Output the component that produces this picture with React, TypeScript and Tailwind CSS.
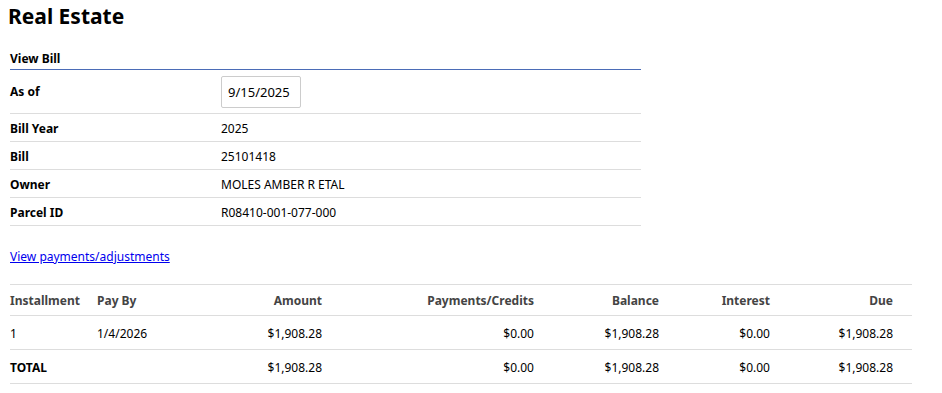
import { FC } from 'react';

interface InfoRow {
  label: string;
  value: string;
}

const info: InfoRow[] = [
  { label: 'Bill Year', value: '2025' },
  { label: 'Bill', value: '25101418' },
  { label: 'Owner', value: 'MOLES AMBER R ETAL' },
  { label: 'Parcel ID', value: 'R08410-001-077-000' },
];

const cols = 'grid grid-cols-[87px_120px_105px_212px_125px_111px_123px] pr-[19px] pt-[2px]';

const App: FC = () => {
  return (
    <div className="min-h-screen bg-white text-black text-[12px] font-['Noto_Sans','Open_Sans',sans-serif]">
      <h1 className="pl-2 pt-[2px] text-[21px] font-bold leading-[28px]">Real Estate</h1>

      <div className="ml-[10px] mt-[20px] w-[631px]">
        <div className="border-b border-[#4b6cb7] pb-[1px] font-bold leading-[18px]">View Bill</div>
        <div className="flex h-[44px] items-center border-b border-[#dddddd] pt-[1px]">
          <div className="w-[211px] font-bold">As of</div>
          <input
            readOnly
            value="9/15/2025"
            className="h-[32px] w-[80px] rounded-[2px] border border-[#cccccc] px-[6px] text-[13px] outline-none"
          />
        </div>
        {info.map((r) => (
          <div key={r.label} className="flex h-[28px] items-center border-b border-[#dddddd] pt-[2px]">
            <div className="w-[211px] font-bold">{r.label}</div>
            <div>{r.value}</div>
          </div>
        ))}
      </div>

      <div className="ml-[10px] mt-[22px] leading-[18px]">
        <a href="#" className="text-[#0000ee] underline">View payments/adjustments</a>
      </div>

      <div className="ml-[10px] mt-[18px] w-[902px] border-t border-[#dddddd]">
        <div className={`${cols} h-[31px] items-center border-b border-[#dddddd] font-bold text-[#444444]`}>
          <div>Installment</div>
          <div>Pay By</div>
          <div className="text-right">Amount</div>
          <div className="text-right">Payments/Credits</div>
          <div className="text-right">Balance</div>
          <div className="text-right">Interest</div>
          <div className="text-right">Due</div>
        </div>
        <div className={`${cols} h-[34px] items-center border-b border-[#dddddd]`}>
          <div>1</div>
          <div>1/4/2026</div>
          <div className="text-right">$1,908.28</div>
          <div className="text-right">$0.00</div>
          <div className="text-right">$1,908.28</div>
          <div className="text-right">$0.00</div>
          <div className="text-right">$1,908.28</div>
        </div>
        <div className={`${cols} h-[34px] items-center border-b border-[#dddddd]`}>
          <div className="font-bold">TOTAL</div>
          <div></div>
          <div className="text-right">$1,908.28</div>
          <div className="text-right">$0.00</div>
          <div className="text-right">$1,908.28</div>
          <div className="text-right">$0.00</div>
          <div className="text-right">$1,908.28</div>
        </div>
      </div>
    </div>
  );
};

export default App;
